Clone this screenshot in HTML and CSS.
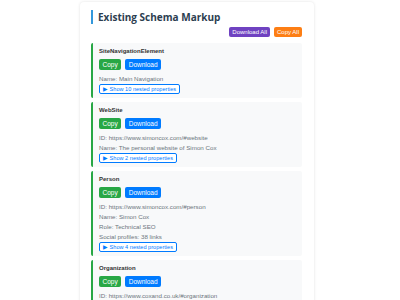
FILE: index.html
```html
<!DOCTYPE html>
<html>
<head>
<meta charset="utf-8">
<link rel="stylesheet" href="styles.css">
</head>
<body>
<div class="page">
  <section class="card">
    <h2 class="title">Existing Schema Markup</h2>
    <div class="actions">
      <button class="btn btn-purple">Download All</button>
      <button class="btn btn-orange">Copy All</button>
    </div>
    <div class="item">
      <div class="item-title">SiteNavigationElement</div>
      <div class="item-buttons">
        <button class="btn-sm btn-green">Copy</button>
        <button class="btn-sm btn-blue">Download</button>
      </div>
      <div class="line">Name: Main Navigation</div>
      <button class="toggle">&#9654; Show 10 nested properties</button>
    </div>
    <div class="item">
      <div class="item-title">WebSite</div>
      <div class="item-buttons">
        <button class="btn-sm btn-green">Copy</button>
        <button class="btn-sm btn-blue">Download</button>
      </div>
      <div class="line">ID: https://www.simoncox.com/#website</div>
      <div class="line">Name: The personal website of Simon Cox</div>
      <button class="toggle">&#9654; Show 2 nested properties</button>
    </div>
    <div class="item">
      <div class="item-title">Person</div>
      <div class="item-buttons">
        <button class="btn-sm btn-green">Copy</button>
        <button class="btn-sm btn-blue">Download</button>
      </div>
      <div class="line">ID: https://www.simoncox.com/#person</div>
      <div class="line">Name: Simon Cox</div>
      <div class="line">Role: Technical SEO</div>
      <div class="line">Social profiles: 38 links</div>
      <button class="toggle">&#9654; Show 4 nested properties</button>
    </div>
    <div class="item">
      <div class="item-title">Organization</div>
      <div class="item-buttons">
        <button class="btn-sm btn-green">Copy</button>
        <button class="btn-sm btn-blue">Download</button>
      </div>
      <div class="line">ID: https://www.coxand.co.uk/#organization</div>
    </div>
  </section>
</div>
</body>
</html>
```

FILE: styles.css
```css
html, body {
  margin: 0;
  padding: 0;
  background: #ffffff;
  font-family: "Liberation Sans", Arial, sans-serif;
  overflow: hidden;
  height: 300px;
}

.page {
  padding-left: 80px;
  padding-top: 2px;
}

.card {
  width: 211px;
  background: #ffffff;
  border-radius: 4px;
  box-shadow: 0 0 3px rgba(0, 0, 0, 0.12);
  padding: 8px 12px 8px 11px;
}

.title {
  margin: 0;
  font-family: "Open Sans", "Liberation Sans", sans-serif;
  font-size: 10px;
  line-height: 14px;
  font-weight: 700;
  color: #2c3e50;
  border-left: 2px solid #3498db;
  padding-left: 5px;
}

.actions {
  display: flex;
  justify-content: flex-end;
  gap: 4px;
  margin-top: 3px;
  margin-bottom: 6px;
}

.btn {
  border: none;
  border-radius: 2px;
  color: #ffffff;
  font-family: "Liberation Sans", Arial, sans-serif;
  font-size: 6px;
  line-height: 10px;
  height: 10px;
  padding: 0 3px;
  margin: 0;
}

.btn-purple { background: #6f42c1; }
.btn-orange { background: #fd7e14; }

.item {
  background: #f8f9fa;
  border-left: 2px solid #28a745;
  border-radius: 2px;
  padding: 4px 8px 4px 6px;
  margin-bottom: 4px;
}

.item-title {
  font-size: 6px;
  line-height: 9px;
  font-weight: 700;
  color: #333333;
}

.item-buttons {
  display: flex;
  gap: 4px;
  margin-top: 3px;
  margin-bottom: 4px;
}

.btn-sm {
  border: none;
  border-radius: 2px;
  color: #ffffff;
  font-family: "Liberation Sans", Arial, sans-serif;
  font-size: 6.5px;
  line-height: 11px;
  height: 11px;
  padding: 0 3.5px;
  margin: 0;
}

.btn-green { background: #28a745; }
.btn-blue { background: #007bff; }

.line {
  font-size: 6.2px;
  line-height: 10px;
  color: #6c757d;
}

.toggle {
  display: block;
  box-sizing: border-box;
  margin: 0;
  border: 1px solid #007bff;
  border-radius: 2px;
  background: #ffffff;
  color: #007bff;
  font-family: "Liberation Sans", Arial, sans-serif;
  font-size: 5.6px;
  line-height: 8px;
  height: 10px;
  padding: 0 3px;
}
```
